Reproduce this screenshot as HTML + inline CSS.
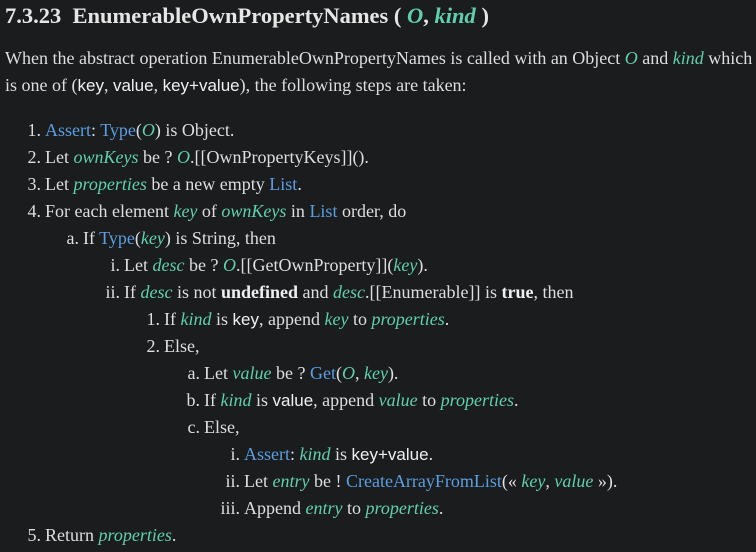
<!DOCTYPE html>
<html><head><meta charset="utf-8"><style>
body{margin:0;background:#1b1c1e;width:756px;height:552px;overflow:hidden;font-family:"Liberation Serif",serif;color:#dedede;font-size:18px}
h1{position:absolute;left:5px;top:3px;margin:0;font-size:22.5px;font-weight:bold;white-space:nowrap;color:#e6e6e6}
.p{position:absolute;left:5px;white-space:nowrap}
.l{position:absolute;white-space:nowrap;height:27px;line-height:27px}
.m{position:absolute;right:100%;margin-right:4px;text-align:right}
.v{color:#5fd0ae;font-style:italic}
.a{color:#5a9fe0}
.c{font-family:"Liberation Sans",sans-serif;color:#f0f0f0;font-size:17px}
b{color:#f0f0f0}
</style></head><body>
<h1>7.3.23&nbsp; EnumerableOwnPropertyNames ( <span class="v">O</span>, <span class="v">kind</span> )</h1>
<div class="p" style="top:45px;line-height:27px">When the abstract operation EnumerableOwnPropertyNames is called with an Object <span class="v">O</span> and <span class="v">kind</span> which<br>is one of (<span class="c">key</span>, <span class="c">value</span>, <span class="c">key+value</span>), the following steps are taken:</div>
<div class="l" style="left:45px;top:117px"><span class="m">1.</span><span class="a">Assert</span>: <span class="a">Type</span>(<span class="v">O</span>) is Object.</div>
<div class="l" style="left:45px;top:144px"><span class="m">2.</span>Let <span class="v">ownKeys</span> be ? <span class="v">O</span>.[[OwnPropertyKeys]]().</div>
<div class="l" style="left:45px;top:171px"><span class="m">3.</span>Let <span class="v">properties</span> be a new empty <span class="a">List</span>.</div>
<div class="l" style="left:45px;top:198px"><span class="m">4.</span>For each element <span class="v">key</span> of <span class="v">ownKeys</span> in <span class="a">List</span> order, do</div>
<div class="l" style="left:83px;top:225px"><span class="m">a.</span>If <span class="a">Type</span>(<span class="v">key</span>) is String, then</div>
<div class="l" style="left:124px;top:252px"><span class="m">i.</span>Let <span class="v">desc</span> be ? <span class="v">O</span>.[[GetOwnProperty]](<span class="v">key</span>).</div>
<div class="l" style="left:124px;top:279px"><span class="m">ii.</span>If <span class="v">desc</span> is not <b>undefined</b> and <span class="v">desc</span>.[[Enumerable]] is <b>true</b>, then</div>
<div class="l" style="left:164px;top:306px"><span class="m">1.</span>If <span class="v">kind</span> is <span class="c">key</span>, append <span class="v">key</span> to <span class="v">properties</span>.</div>
<div class="l" style="left:164px;top:333px"><span class="m">2.</span>Else,</div>
<div class="l" style="left:204px;top:360px"><span class="m">a.</span>Let <span class="v">value</span> be ? <span class="a">Get</span>(<span class="v">O</span>, <span class="v">key</span>).</div>
<div class="l" style="left:204px;top:387px"><span class="m">b.</span>If <span class="v">kind</span> is <span class="c">value</span>, append <span class="v">value</span> to <span class="v">properties</span>.</div>
<div class="l" style="left:204px;top:414px"><span class="m">c.</span>Else,</div>
<div class="l" style="left:244px;top:441px"><span class="m">i.</span><span class="a">Assert</span>: <span class="v">kind</span> is <span class="c">key+value</span>.</div>
<div class="l" style="left:244px;top:468px"><span class="m">ii.</span>Let <span class="v">entry</span> be ! <span class="a">CreateArrayFromList</span>(« <span class="v">key</span>, <span class="v">value</span> »).</div>
<div class="l" style="left:244px;top:495px"><span class="m">iii.</span>Append <span class="v">entry</span> to <span class="v">properties</span>.</div>
<div class="l" style="left:45px;top:522px"><span class="m">5.</span>Return <span class="v">properties</span>.</div>
</body></html>
